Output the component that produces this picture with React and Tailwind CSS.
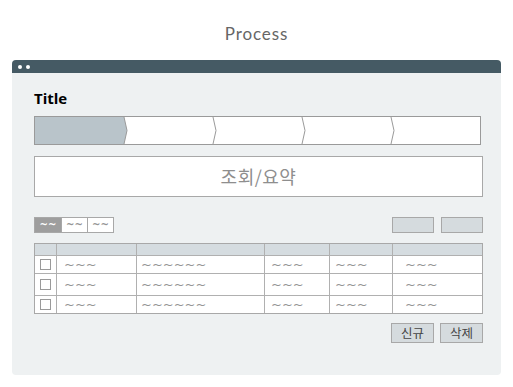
import React from 'react'

const cols = ['w-[21px]', 'w-[80px]', 'w-[128px]', 'w-[65px]', 'w-[63px]', 'flex-1']
const rows = [
    { h: 'h-[18px]', cells: ['~~~', '~~~~~~', '~~~', '~~~', '~~~'] },
    { h: 'h-[22px]', cells: ['~~~', '~~~~~~', '~~~', '~~~', '~~~'] },
    { h: 'h-[18px]', cells: ['~~~', '~~~~~~', '~~~', '~~~', '~~~'] },
]
const pads = ['pl-[7px]', 'pl-[4px]', 'pl-[6px]', 'pl-[5px]', 'pl-[12px]']

function Chevron({ filled }) {
    return (
        <svg className="absolute top-0 right-[-4px] h-full w-[5px] overflow-visible" viewBox="0 0 5 27" preserveAspectRatio="none">
            {filled && <polygon points="0,0 1,0 4,13.5 1,27 0,27" fill="#b9c4ca" />}
            <polyline points="1,0 4,13.5 1,27" fill="none" stroke="#9a9a9a" strokeWidth="1" />
        </svg>
    )
}

function Wave({ children, light, tab }) {
    return (
        <span
            className={`leading-none font-['DejaVu_Sans',sans-serif] ${tab ? 'text-[10px] font-bold' : 'text-[13px]'} ${light ? 'text-white' : 'text-[#959595]'}`}
        >
            {children}
        </span>
    )
}

export default function App() {
    return (
        <div className="w-[513px] h-[387px] bg-white overflow-hidden font-['Noto_Sans','Noto_Sans_CJK_KR',sans-serif]">
            {/* -- Page title -- */}
            <div className="h-[60px] flex justify-center pt-[24px]">
                <span className="text-[17px] leading-[20px] text-[#666] font-['Lato',sans-serif] tracking-[0.9px]">Process</span>
            </div>

            {/* -- Window -- */}
            <div className="mx-[12px] w-[489px] h-[315px] rounded-[4px] bg-[#eef1f2] overflow-hidden">
                <div className="h-[13px] bg-[#455a64] flex items-center gap-[4px] pl-[6px]">
                    <span className="w-[4px] h-[4px] rounded-full bg-white" />
                    <span className="w-[4px] h-[4px] rounded-full bg-white" />
                </div>

                <div className="pl-[22px] pr-[18px] pt-[15px]">
                    <div className="h-[20px] text-[15px] leading-[20px] font-bold text-black font-['Open_Sans',sans-serif]">Title</div>

                    {/* -- Stepper -- */}
                    <div className="mt-[8px] mr-[2px] h-[29px] flex border border-[#9a9a9a] bg-white">
                        {[0, 1, 2, 3, 4].map((i) => (
                            <div key={i} className={`relative flex-1 ${i === 0 ? 'bg-[#b9c4ca]' : ''}`}>
                                {i < 4 && <Chevron filled={i === 0} />}
                            </div>
                        ))}
                    </div>

                    {/* -- Search box -- */}
                    <div className="mt-[11px] h-[41px] flex items-center justify-center border border-[#a8a8a8] bg-white">
                        <span className="text-[18px] tracking-[0.5px] text-[#8e8e8e] font-['Noto_Sans_CJK_KR',sans-serif]">조회/요약</span>
                    </div>

                    {/* -- Tabs + actions -- */}
                    <div className="mt-[20px] h-[16px] flex items-center justify-between">
                        <div className="flex h-[16px] border border-[#a8a8a8]">
                            <div className="w-[26px] flex items-center justify-center bg-[#9e9e9e]"><Wave light tab>~~</Wave></div>
                            <div className="w-[26px] flex items-center justify-center bg-white border-l border-[#a8a8a8]"><Wave tab>~~</Wave></div>
                            <div className="w-[26px] flex items-center justify-center bg-white border-l border-[#a8a8a8]"><Wave tab>~~</Wave></div>
                        </div>
                        <div className="flex gap-[7px]">
                            <div className="w-[42px] h-[16px] bg-[#d5dbde] border border-[#a8a8a8]" />
                            <div className="w-[42px] h-[16px] bg-[#d5dbde] border border-[#a8a8a8]" />
                        </div>
                    </div>

                    {/* -- Table -- */}
                    <div className="mt-[10px] border border-[#a8a8a8] bg-white">
                        <div className="h-[11px] flex bg-[#d5dce0]">
                            {cols.map((c, i) => (
                                <div key={i} className={`${c} ${i > 0 ? 'border-l border-[#b0b0b0]' : ''}`} />
                            ))}
                        </div>
                        {rows.map((r, ri) => (
                            <div key={ri} className={`${r.h} flex border-t border-[#b0b0b0]`}>
                                <div className={`${cols[0]} flex items-center justify-center`}>
                                    <span className="w-[11px] h-[11px] border border-[#9a9a9a] bg-white" />
                                </div>
                                {r.cells.map((t, ci) => (
                                    <div key={ci} className={`${cols[ci + 1]} border-l border-[#b0b0b0] flex items-center ${pads[ci]}`}>
                                        <Wave>{t}</Wave>
                                    </div>
                                ))}
                            </div>
                        ))}
                    </div>

                    {/* -- Bottom buttons -- */}
                    <div className="mt-[9px] flex justify-end gap-[6px]">
                        <button className="w-[43px] h-[20px] bg-[#d5dbde] border border-[#a8a8a8] text-[12.5px] leading-none text-[#444] font-['Noto_Sans_CJK_KR',sans-serif]">신규</button>
                        <button className="w-[43px] h-[20px] bg-[#d5dbde] border border-[#a8a8a8] text-[12.5px] leading-none text-[#444] font-['Noto_Sans_CJK_KR',sans-serif]">삭제</button>
                    </div>
                </div>
            </div>
        </div>
    )
}
